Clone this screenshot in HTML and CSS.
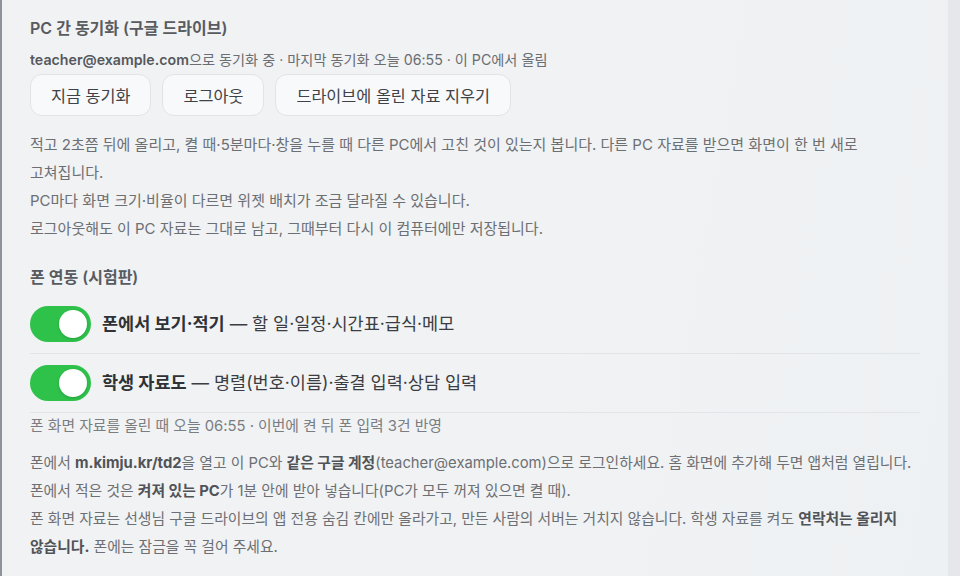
FILE: index.html
```html
<!DOCTYPE html>
<html lang="ko">
<head>
<meta charset="utf-8">
<title>동기화 설정</title>
<link rel="stylesheet" href="styles.css">
</head>
<body>
<div class="window">
  <main class="panel">
    <h3 class="section-title">PC 간 동기화 (구글 드라이브)</h3>
    <p class="status"><b>teacher@example.com</b>으로 동기화 중 · 마지막 동기화 오늘 06:55 · 이 PC에서 올림</p>
    <div class="actions">
      <button class="btn">지금 동기화</button>
      <button class="btn">로그아웃</button>
      <button class="btn">드라이브에 올린 자료 지우기</button>
    </div>
    <div class="notes">
      <p>적고 2초쯤 뒤에 올리고, 켤 때·5분마다·창을 누를 때 다른 PC에서 고친 것이 있는지 봅니다. 다른 PC 자료를 받으면 화면이 한 번 새로 고쳐집니다.</p>
      <p>PC마다 화면 크기·비율이 다르면 위젯 배치가 조금 달라질 수 있습니다.</p>
      <p>로그아웃해도 이 PC 자료는 그대로 남고, 그때부터 다시 이 컴퓨터에만 저장됩니다.</p>
    </div>

    <h3 class="section-title second">폰 연동 (시험판)</h3>
    <div class="toggle-list">
      <label class="toggle-row">
        <span class="switch on"><span class="knob"></span></span>
        <span class="toggle-label"><b>폰에서 보기·적기</b> — 할 일·일정·시간표·급식·메모</span>
      </label>
      <label class="toggle-row">
        <span class="switch on"><span class="knob"></span></span>
        <span class="toggle-label"><b>학생 자료도</b> — 명렬(번호·이름)·출결 입력·상담 입력</span>
      </label>
    </div>
    <p class="phone-status">폰 화면 자료를 올린 때 오늘 06:55 · 이번에 켠 뒤 폰 입력 3건 반영</p>
    <div class="notes notes-phone">
      <p>폰에서 <b>m.kimju.kr/td2</b>을 열고 이 PC와 <b>같은 구글 계정</b>(teacher@example.com)으로 로그인하세요. 홈 화면에 추가해 두면 앱처럼 열립니다.</p>
      <p>폰에서 적은 것은 <b>켜져 있는 PC</b>가 1분 안에 받아 넣습니다(PC가 모두 꺼져 있으면 켤 때).</p>
      <p>폰 화면 자료는 선생님 구글 드라이브의 앱 전용 숨김 칸에만 올라가고, 만든 사람의 서버는 거치지 않습니다. 학생 자료를 켜도 <b>연락처는 올리지</b> <b>않습니다.</b> 폰에는 잠금을 꼭 걸어 주세요.</p>
    </div>
  </main>
  <div class="scroll-track"></div>
</div>
</body>
</html>
```

FILE: styles.css
```css
* { box-sizing: border-box; }

html, body {
  margin: 0;
  padding: 0;
  height: 100%;
}

body {
  font-family: Inter, "Noto Sans CJK KR", sans-serif;
  color: #666a6e;
  background: #eef0f2;
  overflow: hidden;
  word-break: keep-all;
}

.window {
  display: flex;
  height: 576px;
  border-left: 2px solid #8f949a;
}

.panel {
  flex: 1;
  padding: 16px 28px 0 28px;
  background: linear-gradient(100deg, #f1f2f4 0%, #f0f2f4 60%, #eef1f3 100%);
}

.scroll-track {
  width: 12px;
  background: #e5e7ea;
}

.section-title {
  margin: 0;
  font-size: 16px;
  line-height: 24px;
  font-weight: 600;
  color: #585b5f;
}

.section-title.second {
  margin-top: 22px;
}

.status {
  margin: 8px 0 0;
  font-size: 14.2px;
  line-height: 24px;
  color: #6a6d71;
}

.status b {
  font-weight: 600;
  color: #55585c;
}

.actions {
  display: flex;
  gap: 11px;
  margin-top: 2px;
}

.btn {
  height: 42px;
  padding: 0 20px;
  font-family: inherit;
  font-size: 16.3px;
  color: #3f4246;
  background: #f8f9fa;
  border: 1px solid #e1e4e7;
  border-radius: 12px;
}

.notes {
  margin-top: 15px;
}

.notes p {
  margin: 0;
  font-size: 15px;
  line-height: 28px;
  color: #6c6f73;
}

.notes b {
  font-weight: 700;
  color: #505357;
}

.toggle-list {
  margin-top: 6px;
}

.toggle-row {
  display: flex;
  align-items: center;
  gap: 11px;
  padding: 11px 0;
  border-bottom: 1px solid #e2e4e7;
}

.switch {
  position: relative;
  width: 61px;
  height: 36px;
  border-radius: 18px;
  background: #2ec24b;
  flex: none;
}

.knob {
  position: absolute;
  top: 4px;
  right: 4px;
  width: 28px;
  height: 28px;
  border-radius: 50%;
  background: #ffffff;
  box-shadow: 0 1px 3px rgba(0, 0, 0, 0.18);
}

.toggle-label {
  font-size: 17.5px;
  line-height: 24px;
  color: #3a3d41;
}

.toggle-label b {
  font-weight: 700;
  color: #2f3236;
}

.phone-status {
  margin: 1px 0 0;
  font-size: 14.8px;
  line-height: 24px;
  color: #7a7d81;
}

.notes-phone {
  margin-top: 11px;
}

.notes-phone p {
  font-size: 14.8px;
}
```
